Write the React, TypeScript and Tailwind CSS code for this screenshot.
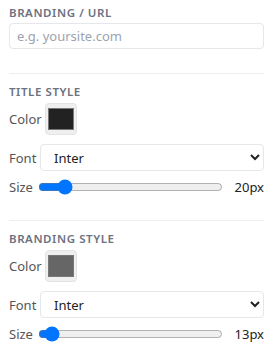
import React, { useState } from 'react';

interface StyleSectionProps {
  title: string;
  color: string;
  size: number;
}

const labelCls = 'shrink-0 text-[13px] leading-[20px] text-[#555]';

const StyleSection: React.FC<StyleSectionProps> = ({ title, color, size }) => {
  const [font, setFont] = useState('Inter');
  const [value, setValue] = useState(size);

  return (
    <div className="border-t border-[#eceef1] pt-[10px]">
      <h3 className="text-[11.5px] font-semibold uppercase tracking-[0.05em] text-[#6b7280] leading-[16px]">{title}</h3>
      <div className="flex items-center gap-2 mt-[3px] h-[32px]">
        <span className={`${labelCls} w-[28px]`}>Color</span>
        <button className="w-[32px] h-[32px] rounded-[4px] bg-[#efefef] border border-[#e3e3e3] flex items-center justify-center">
          <span className="block w-[26px] h-[22px] border border-[#777]" style={{ backgroundColor: color }} />
        </button>
      </div>
      <div className="flex items-center gap-2 mt-[9px] h-[27px]">
        <span className={`${labelCls} w-[23px]`}>Font</span>
        <select
          value={font}
          onChange={(e) => setFont(e.target.value)}
          className="flex-1 h-[27px] border border-[#e5e7eb] rounded-[4px] bg-white pl-[9px] pr-[4px] text-[13px] leading-[20px] text-[#222]"
        >
          <option>Inter</option>
          <option>Roboto</option>
          <option>Lato</option>
        </select>
      </div>
      <div className="flex items-center gap-2 mt-[6px] h-[20px]">
        <span className={`${labelCls} w-[21px]`}>Size</span>
        <input
          type="range"
          min={10}
          max={100}
          value={value}
          onChange={(e) => setValue(Number(e.target.value))}
          className="flex-1 min-w-0 mx-0"
        />
        <span className="shrink-0 ml-[4px] text-[13px] leading-[20px] text-[#222]">{value}px</span>
      </div>
    </div>
  );
};

export default function App() {
  const [url, setUrl] = useState('');

  return (
    <div className="w-[273px] h-[350px] bg-white px-[9px] pt-[5px] font-['Noto_Sans','Open_Sans',sans-serif]">
      <div className="pb-[24px]">
        <h3 className="text-[11.5px] font-semibold uppercase tracking-[0.05em] text-[#6b7280] leading-[16px]">Branding / URL</h3>
        <input
          type="text"
          value={url}
          onChange={(e) => setUrl(e.target.value)}
          placeholder="e.g. yoursite.com"
          className="block mt-[2px] w-full h-[26px] border border-[#e5e7eb] rounded-[4px] px-[7px] text-[13px] leading-[20px] placeholder:text-[#9ca3af] focus:outline-none"
        />
      </div>
      <StyleSection title="Title Style" color="#222222" size={20} />
      <div className="mt-[23px]">
        <StyleSection title="Branding Style" color="#666666" size={13} />
      </div>
    </div>
  );
}
